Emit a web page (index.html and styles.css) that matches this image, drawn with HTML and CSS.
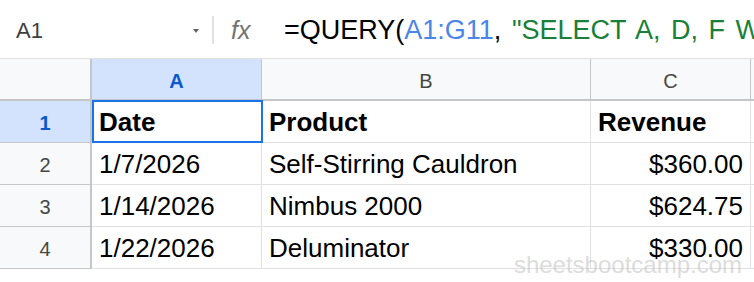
FILE: index.html
```html
<!DOCTYPE html>
<html lang="en">
<head>
    <meta charset="UTF-8">
    <meta name="viewport" content="width=device-width, initial-scale=1.0">
    <title>QUERY example</title>
    <link rel="stylesheet" href="styles.css">
</head>
<body>
    <div class="sheet">
        <!-- Formula bar -->
        <div class="formula-bar">
            <div class="name-box">
                <span class="cell-ref">A1</span>
                <span class="caret"></span>
            </div>
            <div class="divider"></div>
            <div class="fx">fx</div>
            <div class="formula">=QUERY(<span class="ref">A1:G11</span>, <span class="str">"SELECT A, D, F WHERE E &gt; 300")</span></div>
        </div>

        <!-- Grid -->
        <div class="grid">
            <div class="corner"></div>
            <div class="col-head active">A</div>
            <div class="col-head">B</div>
            <div class="col-head">C</div>
            <div class="col-head last"></div>

            <div class="row-head active">1</div>
            <div class="cell bold selected">Date</div>
            <div class="cell bold">Product</div>
            <div class="cell bold">Revenue</div>
            <div class="cell last"></div>

            <div class="row-head">2</div>
            <div class="cell">1/7/2026</div>
            <div class="cell">Self-Stirring Cauldron</div>
            <div class="cell num">$360.00</div>
            <div class="cell last"></div>

            <div class="row-head">3</div>
            <div class="cell">1/14/2026</div>
            <div class="cell">Nimbus 2000</div>
            <div class="cell num">$624.75</div>
            <div class="cell last"></div>

            <div class="row-head">4</div>
            <div class="cell">1/22/2026</div>
            <div class="cell">Deluminator</div>
            <div class="cell num">$330.00</div>
            <div class="cell last"></div>
        </div>

        <div class="watermark">sheetsbootcamp.com</div>
    </div>
</body>
</html>
```

FILE: styles.css
```css
/* Page */
* {
    box-sizing: border-box;
}

body {
    margin: 0;
    background-color: #ffffff;
    font-family: "Liberation Sans", Arial, sans-serif;
    overflow: hidden;
}

.sheet {
    position: relative;
    width: 754px;
    height: 282px;
    overflow: hidden;
}

/* Formula bar */
.formula-bar {
    display: flex;
    align-items: center;
    height: 59px;
    border-bottom: 1px solid #e1e1e1;
    white-space: nowrap;
    overflow: hidden;
}

.formula-bar > div {
    flex-shrink: 0;
}

.name-box {
    display: flex;
    align-items: center;
    width: 212px;
    padding-left: 16px;
    padding-top: 3px;
}

.cell-ref {
    flex: 1;
    font-size: 22px;
    color: #3c4043;
}

.caret {
    width: 0;
    height: 0;
    margin-right: 13px;
    border-left: 3px solid transparent;
    border-right: 3px solid transparent;
    border-top: 4px solid #5f6368;
}

.divider {
    width: 2px;
    height: 28px;
    margin-top: 2px;
    background-color: #e1e1e1;
}

.fx {
    margin-left: 17px;
    width: 53px;
    padding-top: 2px;
    font-size: 25px;
    font-style: italic;
    color: #737373;
}

.formula {
    font-size: 27px;
    word-spacing: 3px;
    color: #000000;
    padding-top: 2px;
}

.ref {
    color: #4a86e8;
}

.str {
    color: #188038;
}

/* Grid */
.grid {
    display: grid;
    grid-template-columns: 92px 170px 329px 160px 20px;
    grid-template-rows: 42px repeat(4, 42px);
}

.corner,
.col-head {
    background-color: #f8f9fa;
    border-bottom: 2px solid #c4c7c5;
}

.corner {
    border-right: 2px solid #c4c7c5;
}

.col-head {
    display: flex;
    align-items: center;
    justify-content: center;
    padding-top: 5px;
    border-right: 1px solid #c4c7c5;
    font-size: 20px;
    color: #444746;
}

.col-head.last {
    border-right: none;
}

.col-head.active {
    background-color: #d3e3fd;
    color: #0b57d0;
    font-weight: bold;
}

.row-head {
    display: flex;
    align-items: center;
    justify-content: center;
    padding-top: 4px;
    background-color: #f8f9fa;
    border-right: 2px solid #c4c7c5;
    border-bottom: 1px solid #c4c7c5;
    font-size: 20px;
    color: #444746;
}

.row-head.active {
    background-color: #d3e3fd;
    color: #0b57d0;
    font-weight: bold;
}

.cell {
    display: flex;
    align-items: flex-end;
    padding: 0 7px 4px 7px;
    border-right: 1px solid #e1e1e1;
    border-bottom: 1px solid #e1e1e1;
    font-size: 26px;
    color: #000000;
    white-space: nowrap;
}

.cell.bold {
    font-weight: bold;
}

.cell.num {
    justify-content: flex-end;
}

.cell.last {
    border-right: none;
}

/* Active cell outline */
.cell.selected {
    position: relative;
}

.cell.selected::after {
    content: "";
    position: absolute;
    top: -1px;
    left: 0;
    right: -2px;
    bottom: -1px;
    border: 2px solid #1a73e8;
}

.cell.selected::before {
    content: "";
    position: absolute;
    right: 2px;
    bottom: 1px;
    width: 4px;
    height: 4px;
    background-color: #ffffff;
    border-radius: 1px;
    z-index: 1;
}

/* Watermark */
.watermark {
    position: absolute;
    right: 12px;
    bottom: 3px;
    font-size: 24px;
    color: rgba(190, 190, 190, 0.55);
}
```
